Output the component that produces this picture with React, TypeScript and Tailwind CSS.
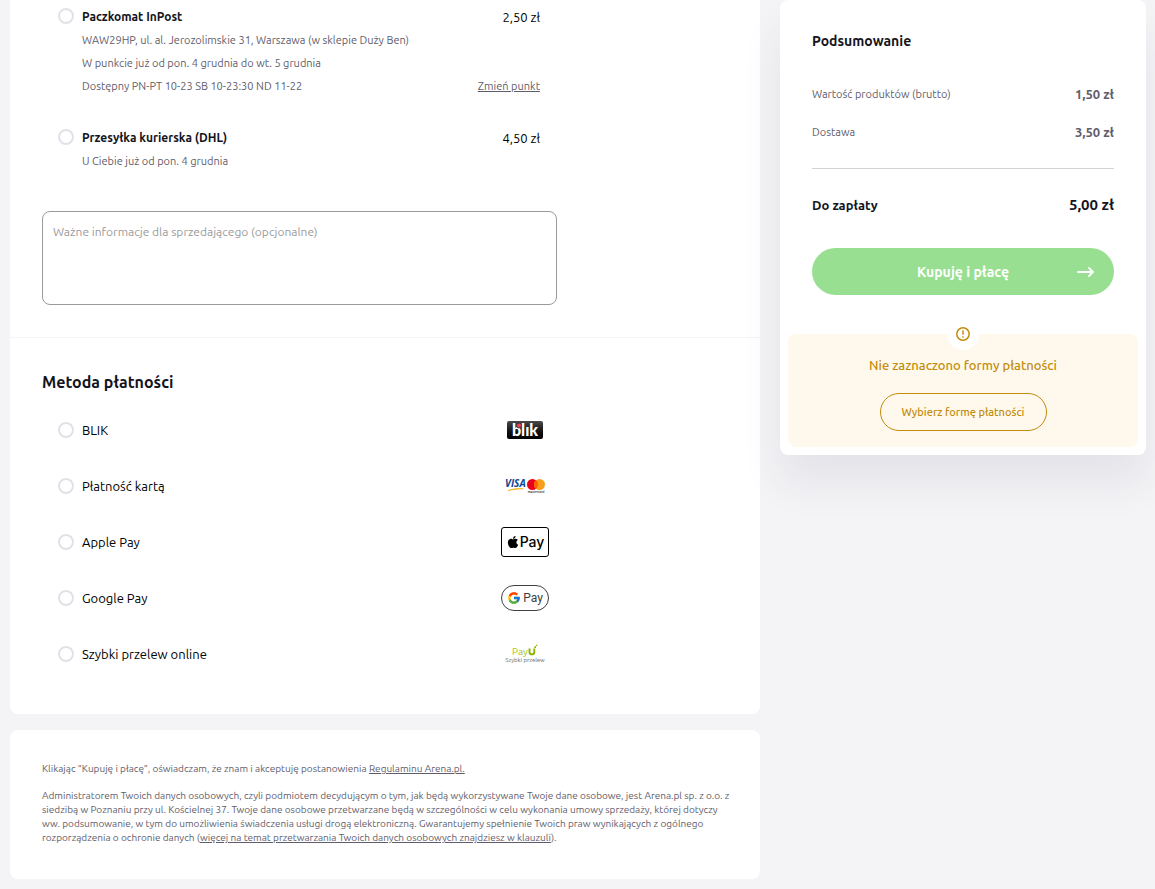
import { useState } from 'react'
import type { ReactNode } from 'react'
import { FaApple } from 'react-icons/fa'
import { FcGoogle } from 'react-icons/fc'

interface Delivery {
  id: string
  name: string
  price: string
  details: string[]
  changeable?: boolean
}

const deliveries: Delivery[] = [
  {
    id: 'inpost',
    name: 'Paczkomat InPost',
    price: '2,50 zł',
    details: [
      'WAW29HP, ul. al. Jerozolimskie 31, Warszawa (w sklepie Duży Ben)',
      'W punkcie już od pon. 4 grudnia do wt. 5 grudnia',
      'Dostępny PN-PT 10-23 SB 10-23:30 ND 11-22',
    ],
    changeable: true,
  },
  {
    id: 'dhl',
    name: 'Przesyłka kurierska (DHL)',
    price: '4,50 zł',
    details: ['U Ciebie już od pon. 4 grudnia'],
  },
]

function BlikLogo() {
  return (
    <svg width="36" height="18" viewBox="0 0 36 18" aria-hidden="true">
      <defs>
        <linearGradient id="blik-bg" x1="0" y1="0" x2="0" y2="1">
          <stop offset="0" stopColor="#4a4a4a" />
          <stop offset="0.6" stopColor="#111" />
          <stop offset="1" stopColor="#000" />
        </linearGradient>
      </defs>
      <rect width="36" height="18" rx="2" fill="url(#blik-bg)" />
      <text x="18" y="15" textAnchor="middle" fontFamily="Lato, sans-serif" fontWeight="900" fontSize="16" fill="#fff">
        blık
      </text>
      <circle cx="12" cy="4.5" r="2.5" fill="#e9425a" stroke="#333" strokeWidth="0.8" />
    </svg>
  )
}

function CardsLogo() {
  return (
    <svg width="40" height="16" viewBox="0 0 40 16" aria-hidden="true">
      <text x="0" y="9" fontFamily="Open Sans, sans-serif" fontWeight="700" fontStyle="italic" fontSize="10" fill="#0e4595">
        VISA
      </text>
      <path d="M3 12.6c5-2 10.5-2.4 15.5-1.8-5.5.1-10.5.8-15.5 1.8Z" fill="#f2ae14" stroke="#f2ae14" strokeWidth="0.6" />
      <circle cx="27.5" cy="6.5" r="5.5" fill="#eb001b" />
      <circle cx="34.5" cy="6.5" r="5.5" fill="#f79e1b" />
      <path d="M31 2.3a5.5 5.5 0 0 1 0 8.4 5.5 5.5 0 0 1 0-8.4Z" fill="#ff5f00" />
      <text x="31" y="15" textAnchor="middle" fontFamily="Open Sans, sans-serif" fontWeight="600" fontSize="3" fill="#222">
        mastercard
      </text>
    </svg>
  )
}

function ApplePayLogo() {
  return (
    <span className="flex h-[30px] w-12 items-center justify-center rounded-[3px] border border-black text-black">
      <FaApple className="size-3.5" />
      <span className="font-[Inter] text-sm leading-none font-medium">Pay</span>
    </span>
  )
}

function GooglePayLogo() {
  return (
    <span className="flex h-[26px] w-12 items-center justify-center gap-0.5 rounded-full border border-[#3c4043] text-[#3c4043]">
      <FcGoogle className="size-3.5" />
      <span className="font-[Roboto] text-[12px] leading-none">Pay</span>
    </span>
  )
}

function PayULogo() {
  return (
    <svg width="44" height="20" viewBox="0 0 44 20" aria-hidden="true">
      <text x="9" y="11" fontFamily="Ubuntu, Noto Sans, sans-serif" fontSize="10" fill="#a6c307">
        Pay
      </text>
      <path d="M26.5 4.500v3.500a2.400 2.400 0 0 0 4.800 0v-3.500" fill="none" stroke="#8fb400" strokeWidth="1.900" />
      <path d="M31.300 2.300h1.700v1.700h-1.700zM33 .7h1.300v1.300h-1.300z" fill="#8fb400" />
      <text x="22" y="18" textAnchor="middle" fontFamily="Ubuntu, Noto Sans, sans-serif" fontSize="6" fill="#666">
        Szybki przelew
      </text>
    </svg>
  )
}

const payments: { id: string; name: string; logo: ReactNode }[] = [
  { id: 'blik', name: 'BLIK', logo: <BlikLogo /> },
  { id: 'card', name: 'Płatność kartą', logo: <CardsLogo /> },
  { id: 'apple', name: 'Apple Pay', logo: <ApplePayLogo /> },
  { id: 'google', name: 'Google Pay', logo: <GooglePayLogo /> },
  { id: 'payu', name: 'Szybki przelew online', logo: <PayULogo /> },
]

const radioClass =
  'size-4 shrink-0 cursor-pointer appearance-none rounded-full border-2 border-[#e1e1e8] bg-white checked:border-4 checked:border-[#33c02c]'

export default function App() {
  const [delivery, setDelivery] = useState('')
  const [payment, setPayment] = useState('')
  const [note, setNote] = useState('')

  return (
    <div className="min-h-screen bg-[#f4f4f6] pr-[9px] pb-2.5 pl-2.5 font-[Ubuntu,'Noto_Sans',sans-serif] text-[#14141c]">
      <div className="flex items-start gap-5">
        <main className="flex min-w-0 flex-1 flex-col gap-4">
          <form className="rounded-b-lg bg-white">
            {/* Delivery */}
            <section className="border-b border-[#f4f4f6] px-8 pt-[5px] pb-8">
              <div className="flex max-w-[515px] flex-col gap-7 pr-[17px] pl-4">
                {deliveries.map((item) => (
                  <div key={item.id} className="flex items-start gap-2">
                    <input
                      id={item.id}
                      type="radio"
                      name="delivery"
                      checked={delivery === item.id}
                      onChange={() => setDelivery(item.id)}
                      className={`mt-[3px] ${radioClass}`}
                    />
                    <div className="flex-1">
                      <div className="flex items-center justify-between leading-6">
                        <label htmlFor={item.id} className="text-[12px] font-bold">{item.name}</label>
                        <span className="text-[13px] text-black">{item.price}</span>
                      </div>
                      <div className="flex items-end justify-between text-[11px] leading-[23px] text-[#5f5d6b]">
                        <div>
                          {item.details.map((line) => (
                            <p key={line}>{line}</p>
                          ))}
                        </div>
                        {item.changeable && (
                          <a href="#punkt" className="underline">Zmień punkt</a>
                        )}
                      </div>
                    </div>
                  </div>
                ))}
              </div>
              <textarea
                value={note}
                onChange={(e) => setNote(e.target.value)}
                aria-label="Ważne informacje dla sprzedającego"
                placeholder="Ważne informacje dla sprzedającego (opcjonalne)"
                className="mt-[38px] block h-[94px] w-full max-w-[515px] resize-none rounded-lg border border-[#9a9a9a] px-2.5 py-3 text-[12px] leading-4 placeholder:text-[#9a9a9a]"
              />
            </section>

            {/* Payment */}
            <section className="p-8">
              <h2 className="mb-2 text-base leading-6 font-bold">Metoda płatności</h2>
              <div className="max-w-[515px] pr-2 pl-4">
                {payments.map((item) => (
                  <div key={item.id} className="flex h-14 items-center gap-2">
                    <input
                      id={item.id}
                      type="radio"
                      name="payment"
                      checked={payment === item.id}
                      onChange={() => setPayment(item.id)}
                      className={radioClass}
                    />
                    <label htmlFor={item.id} className="flex flex-1 items-center justify-between text-[13px] leading-6 text-black">
                      {item.name}
                      <span className="flex w-12 justify-center">{item.logo}</span>
                    </label>
                  </div>
                ))}
              </div>
            </section>
          </form>

          <footer className="flex flex-col gap-[13px] rounded-lg bg-white pt-8 pr-7 pb-[34px] pl-8 text-[10px] leading-[14px] text-[#5f5d6b]">
            <p>
              Klikając "Kupuję i płacę", oświadczam, że znam i akceptuję postanowienia{' '}
              <a href="#regulamin" className="underline">Regulaminu Arena.pl.</a>
            </p>
            <p>
              Administratorem Twoich danych osobowych, czyli podmiotem decydującym o tym, jak będą wykorzystywane Twoje
              dane osobowe, jest Arena.pl sp. z o.o. z siedzibą w Poznaniu przy ul. Kościelnej 37. Twoje dane osobowe
              przetwarzane będą w szczególności w celu wykonania umowy sprzedaży, której dotyczy ww. podsumowanie, w tym
              do umożliwienia świadczenia usługi drogą elektroniczną. Gwarantujemy spełnienie Twoich praw wynikających z
              ogólnego rozporządzenia o ochronie danych (
              <a href="#klauzula" className="underline">
                więcej na temat przetwarzania Twoich danych osobowych znajdziesz w klauzuli
              </a>
              ).
            </p>
          </footer>
        </main>

        <aside className="w-[366px] shrink-0 rounded-lg bg-white p-2 shadow-[0_28px_40px_rgba(54,40,94,0.08)]">
          <div className="px-6 pt-[21px]">
            <h2 className="text-sm leading-6 font-bold">Podsumowanie</h2>
            <dl className="mt-[29px] flex flex-col gap-3.5 text-[11px] leading-6 text-[#5f5d6b]">
              <div className="flex items-center justify-between">
                <dt>Wartość produktów (brutto)</dt>
                <dd className="text-[13px] font-bold">1,50 zł</dd>
              </div>
              <div className="flex items-center justify-between">
                <dt>Dostawa</dt>
                <dd className="text-[13px] font-bold">3,50 zł</dd>
              </div>
            </dl>
            <div className="mt-6 flex items-center justify-between border-t border-[#d2d2d4] pt-6 leading-6 font-bold">
              <span className="text-[13px]">Do zapłaty</span>
              <span className="text-[15px]">5,00 zł</span>
            </div>
            <button
              type="button"
              className="relative mt-[31px] block h-[47px] w-full rounded-full bg-[#98df91] text-sm font-bold text-white"
            >
              Kupuję i płacę
              <svg
                className="absolute top-1/2 right-5 -translate-y-1/2"
                width="17"
                height="12"
                viewBox="0 0 17 12"
                fill="none"
                stroke="currentColor"
                strokeWidth="1.8"
                strokeLinecap="round"
                strokeLinejoin="round"
                aria-hidden="true"
              >
                <path d="M1 6h15M12 2l4 4-4 4" />
              </svg>
            </button>
          </div>

          {/* Missing payment warning */}
          <div className="relative mt-[39px] flex flex-col items-center rounded-lg bg-[#fff9ed] pt-[19px] pb-4 text-[#c28c0c]">
            <span className="absolute -top-4 left-1/2 flex size-8 -translate-x-1/2 items-center justify-center rounded-full bg-white">
              <svg width="14" height="14" viewBox="0 0 14 14" fill="none" stroke="currentColor" aria-hidden="true">
                <circle cx="7" cy="7" r="6.2" strokeWidth="1.5" />
                <path d="M7 3.300v4.500M7 9.200v1.500" strokeWidth="1.4" />
              </svg>
            </span>
            <p className="text-[13px] leading-6 font-medium">Nie zaznaczono formy płatności</p>
            <button
              type="button"
              className="mt-4 h-[38px] w-[167px] rounded-full border border-[#c28c0c] text-[11px] font-medium"
            >
              Wybierz formę płatności
            </button>
          </div>
        </aside>
      </div>
    </div>
  )
}
